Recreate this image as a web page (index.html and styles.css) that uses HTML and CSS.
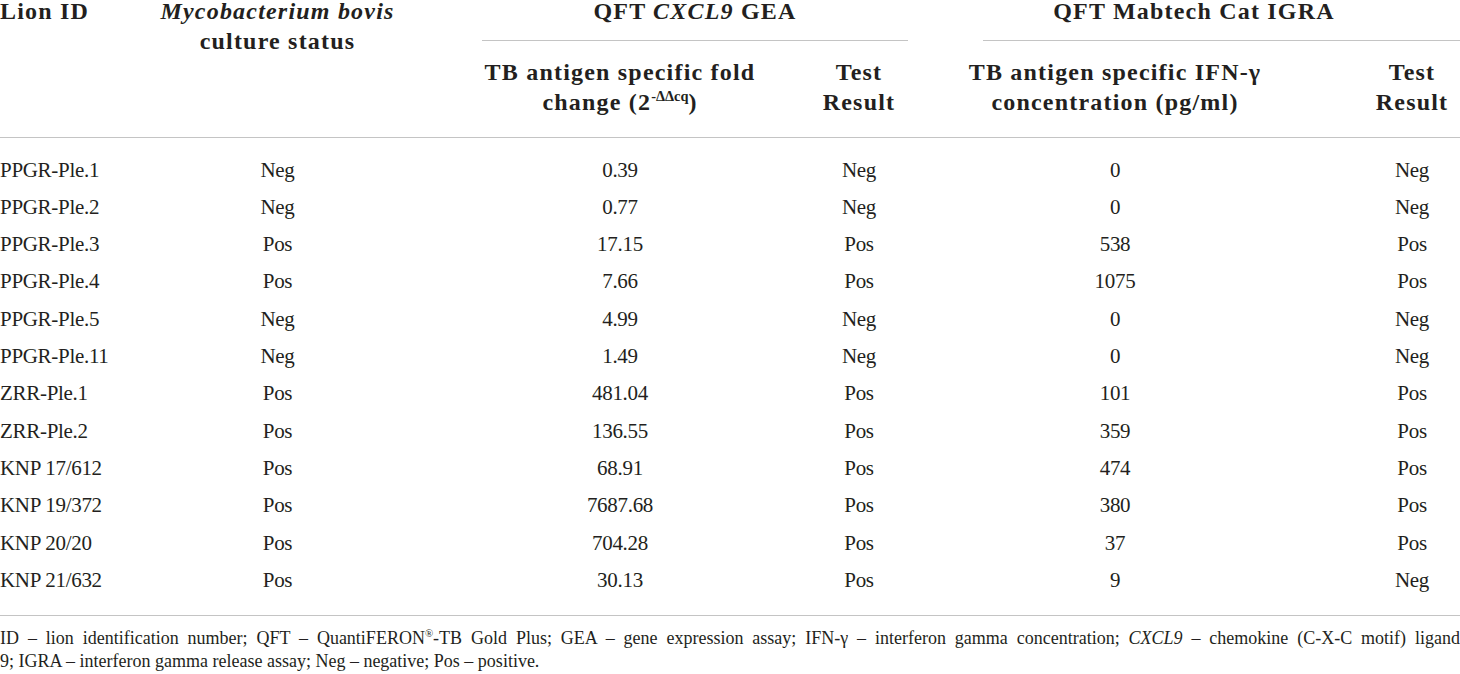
FILE: index.html
```html
<!DOCTYPE html>
<html lang="en">

<head>
  <title>Lion TB test results</title>
  <meta charset="utf-8">
  <meta name="viewport" content="width=device-width, initial-scale=1.0">
  <link rel="stylesheet" href="styles.css">
</head>

<body>
  <table class="results">
    <colgroup>
      <col class="col-id">
      <col class="col-culture">
      <col class="col-fold">
      <col class="col-gea-result">
      <col class="col-ifn">
      <col class="col-igra-result">
    </colgroup>
    <thead>
      <tr>
        <th rowspan="2" class="head-id">Lion ID</th>
        <th rowspan="2" class="head-culture"><i>Mycobacterium bovis</i><br>culture status</th>
        <th colspan="2" class="head-group"><div class="group group-gea">QFT <i>CXCL9</i> GEA</div></th>
        <th colspan="2" class="head-group"><div class="group group-igra">QFT Mabtech Cat IGRA</div></th>
      </tr>
      <tr class="sub-head">
        <th>TB antigen specific fold<br>change (2<sup>-ΔΔcq</sup>)</th>
        <th>Test<br>Result</th>
        <th class="ifn">TB antigen specific IFN-γ<br>concentration (pg/ml)</th>
        <th>Test<br>Result</th>
      </tr>
    </thead>
    <tbody>
      <tr><td>PPGR-Ple.1</td><td>Neg</td><td>0.39</td><td>Neg</td><td class="ifn">0</td><td>Neg</td></tr>
      <tr><td>PPGR-Ple.2</td><td>Neg</td><td>0.77</td><td>Neg</td><td class="ifn">0</td><td>Neg</td></tr>
      <tr><td>PPGR-Ple.3</td><td>Pos</td><td>17.15</td><td>Pos</td><td class="ifn">538</td><td>Pos</td></tr>
      <tr><td>PPGR-Ple.4</td><td>Pos</td><td>7.66</td><td>Pos</td><td class="ifn">1075</td><td>Pos</td></tr>
      <tr><td>PPGR-Ple.5</td><td>Neg</td><td>4.99</td><td>Neg</td><td class="ifn">0</td><td>Neg</td></tr>
      <tr><td>PPGR-Ple.11</td><td>Neg</td><td>1.49</td><td>Neg</td><td class="ifn">0</td><td>Neg</td></tr>
      <tr><td>ZRR-Ple.1</td><td>Pos</td><td>481.04</td><td>Pos</td><td class="ifn">101</td><td>Pos</td></tr>
      <tr><td>ZRR-Ple.2</td><td>Pos</td><td>136.55</td><td>Pos</td><td class="ifn">359</td><td>Pos</td></tr>
      <tr><td>KNP 17/612</td><td>Pos</td><td>68.91</td><td>Pos</td><td class="ifn">474</td><td>Pos</td></tr>
      <tr><td>KNP 19/372</td><td>Pos</td><td>7687.68</td><td>Pos</td><td class="ifn">380</td><td>Pos</td></tr>
      <tr><td>KNP 20/20</td><td>Pos</td><td>704.28</td><td>Pos</td><td class="ifn">37</td><td>Pos</td></tr>
      <tr><td>KNP 21/632</td><td>Pos</td><td>30.13</td><td>Pos</td><td class="ifn">9</td><td>Neg</td></tr>
    </tbody>
  </table>

  <p class="note"><span class="note-first">ID – lion identification number; QFT – QuantiFERON<sup>®</sup>-TB Gold Plus; GEA – gene expression assay; IFN-γ – interferon gamma concentration; <i>CXCL9</i> – chemokine (C-X-C motif) ligand</span> 9; IGRA – interferon gamma release assay; Neg – negative; Pos – positive.</p>
</body>

</html>
```

FILE: styles.css
```css
html, body {
  margin: 0;
  overflow: hidden;
}

body {
  font-family: "Liberation Serif", "Times New Roman", serif;
  color: #231f20;
  background: #fff;
}

.results {
  width: 1460px;
  table-layout: fixed;
  border-collapse: collapse;
  margin-top: -4px;
}

.col-id { width: 115px; }
.col-culture { width: 325px; }
.col-fold { width: 360px; }
.col-gea-result { width: 118px; }
.col-ifn { width: 446px; }
.col-igra-result { width: 96px; }

thead {
  border-bottom: 1px solid #c4c4c4;
}

th {
  font-size: 24px;
  line-height: 30px;
  letter-spacing: 1.2px;
  font-weight: bold;
  text-align: center;
  vertical-align: top;
  padding: 0;
}

th.head-id {
  text-align: left;
}

.group {
  padding-bottom: 14px;
  border-bottom: 1px solid #c4c4c4;
}

.group-gea {
  margin-left: 42px;
  margin-right: 10px;
}

.group-igra {
  margin-left: 65px;
  padding-right: 55px;
}

.sub-head th {
  padding-top: 16px;
  padding-bottom: 20px;
}

sup {
  font-size: 0.6em;
  line-height: 0;
  letter-spacing: 0;
}

.ifn {
  padding-right: 52px;
}

td {
  font-size: 21px;
  line-height: 37.33px;
  letter-spacing: -0.3px;
  padding: 0;
  text-align: center;
  white-space: nowrap;
}

td:first-child {
  text-align: left;
}

tbody tr:first-child td {
  padding-top: 13.5px;
}

tbody tr:last-child td {
  padding-bottom: 15.5px;
}

tbody {
  border-bottom: 1px solid #c4c4c4;
}

.note {
  font-size: 18px;
  line-height: 23px;
  margin: 11px 0 0;
}

.note-first {
  display: block;
  text-align: justify;
  text-align-last: justify;
}
```
